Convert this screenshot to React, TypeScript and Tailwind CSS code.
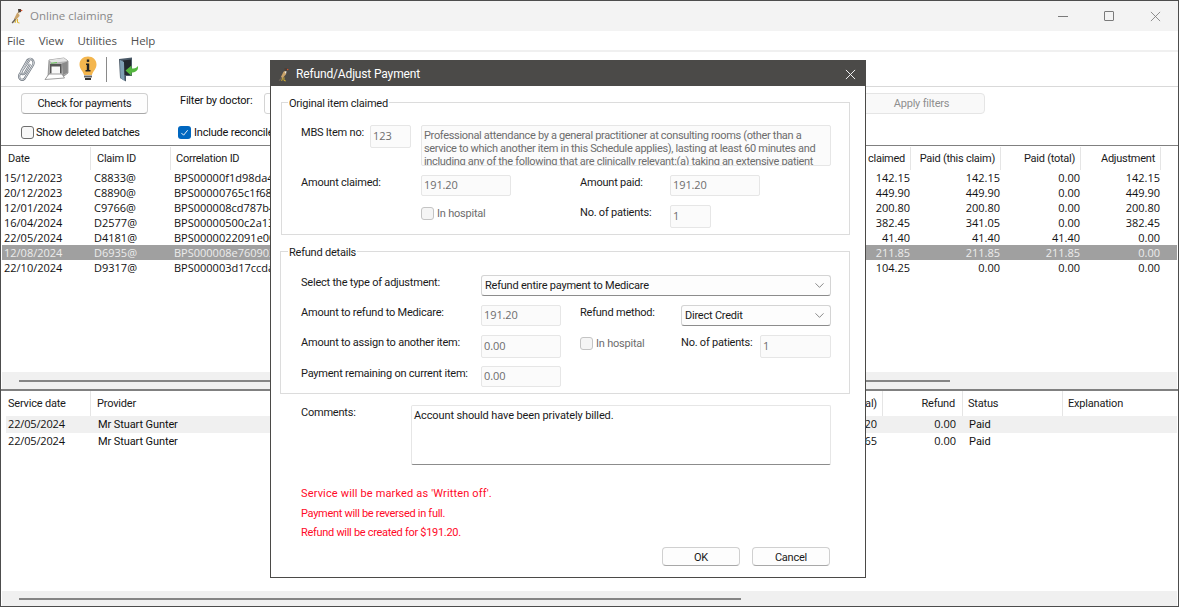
import React from 'react';
import { ChevronDown } from 'lucide-react';

type ClaimRow = {
  date: string;
  claimId: string;
  correlation: string;
  claimed: string;
  paid: string;
  paidTotal: string;
  adjustment: string;
  selected?: boolean;
};

const claims: ClaimRow[] = [
  { date: '15/12/2023', claimId: 'C8833@', correlation: 'BPS00000f1d98da4', claimed: '142.15', paid: '142.15', paidTotal: '0.00', adjustment: '142.15' },
  { date: '20/12/2023', claimId: 'C8890@', correlation: 'BPS00000765c1f68', claimed: '449.90', paid: '449.90', paidTotal: '0.00', adjustment: '449.90' },
  { date: '12/01/2024', claimId: 'C9766@', correlation: 'BPS000008cd787b4', claimed: '200.80', paid: '200.80', paidTotal: '0.00', adjustment: '200.80' },
  { date: '16/04/2024', claimId: 'D2577@', correlation: 'BPS00000500c2a13', claimed: '382.45', paid: '341.05', paidTotal: '0.00', adjustment: '382.45' },
  { date: '22/05/2024', claimId: 'D4181@', correlation: 'BPS0000022091e00', claimed: '41.40', paid: '41.40', paidTotal: '41.40', adjustment: '0.00' },
  { date: '12/08/2024', claimId: 'D6935@', correlation: 'BPS000008e760903', claimed: '211.85', paid: '211.85', paidTotal: '211.85', adjustment: '0.00', selected: true },
  { date: '22/10/2024', claimId: 'D9317@', correlation: 'BPS000003d17ccda', claimed: '104.25', paid: '0.00', paidTotal: '0.00', adjustment: '0.00' },
];

function BirdIcon({ className }: { className?: string }) {
  return (
    <svg viewBox="0 0 12 16" className={className}>
      <path d="M3 11 L6 5 L9 3 L8.5 8 L5 12 Z" fill="#c9a36a" />
      <path d="M7 1 L10 1 L10 4 L7.5 5 Z" fill="#4a4038" />
      <path d="M9.8 1.6 L11.8 2.6 L9.8 3.6 Z" fill="#e0502a" />
      <path d="M7 5 L9.2 4.2 L8.8 7.5 Z" fill="#f2ecdf" />
      <path d="M0.6 14.4 L4 10.6 L5 12 L1.6 15.4 Z" fill="#6a6258" />
      <path d="M5 12 L4 15 M6.5 11 L6.5 14.5 L8.5 15" stroke="#e0b830" strokeWidth="1" fill="none" />
    </svg>
  );
}

function PaperclipIcon() {
  const d = 'M13.5 2.5 L2.8 18 C0.6 22 4.4 25.6 7.6 22.6 L16 9 C18 4.6 13.6 0.6 10.6 4 L4.6 14.5 C3.2 17.5 6.2 19.4 8 16.8 L13 8';
  return (
    <svg viewBox="0 0 18 26" className="w-[18px] h-[26px]">
      <path d={d} fill="none" stroke="#6f7780" strokeWidth="2.2" />
      <path d={d} fill="none" stroke="#eef0f2" strokeWidth="0.8" />
    </svg>
  );
}

function PrinterIcon() {
  return (
    <svg viewBox="0 0 25 24" className="w-[25px] h-[24px]">
      <path d="M5 3 L20 1 L24 4 L24 16 L20 19 L4 19 Z" fill="#b4b4b4" stroke="#6a6a6a" strokeWidth="0.6" />
      <path d="M5 3 L20 1 L23.5 4 L8 6 Z" fill="#e4e4e4" />
      <path d="M18 6.5 L23.5 4.5 L23.5 15.5 L19 18 Z" fill="#8a8a8a" />
      <rect x="6" y="7" width="11.5" height="9" fill="#565656" />
      <path d="M7 5.8 L13 5 L13 6 L7 6.8 Z" fill="#67c35a" />
      <path d="M7.5 9.5 L16 9.5 L16 17 L7.5 17 Z" fill="#f8f8f8" />
      <path d="M5 17 L18 17 L20.5 21 L1 22.5 Z" fill="#ffffff" stroke="#777" strokeWidth="0.7" />
    </svg>
  );
}

function BulbIcon() {
  return (
    <svg viewBox="0 0 18 26" className="w-[18px] h-[26px]">
      <path d="M9 0.5 C4 0.5 0.5 4 0.5 8.5 C0.5 13 4 15 5 19 L13 19 C14 15 17.5 13 17.5 8.5 C17.5 4 14 0.5 9 0.5 Z" fill="#f4b64e" />
      <rect x="7.8" y="3.5" width="2.4" height="2.4" fill="#222" />
      <path d="M7 7.5 L10.2 7.5 L10.2 14 L11.5 14 L11.5 15.5 L6.5 15.5 L6.5 14 L7.8 14 L7.8 9 L7 9 Z" fill="#222" />
      <rect x="5" y="19.5" width="8" height="2" fill="#666" />
      <rect x="6" y="22" width="6" height="2" fill="#333" />
    </svg>
  );
}

function DoorIcon() {
  return (
    <svg viewBox="0 0 21 25" className="w-[21px] h-[25px]">
      <path d="M1 2 L14 0.5 L14 19 L8 19 L8 24.5 L2 21 Z" fill="#4b5a68" />
      <path d="M5 3.5 L13 2.6 L13 18 L5 18 Z" fill="#22282e" />
      <path d="M2 3 L6 5 L6.5 24 L2.5 21 Z" fill="#7fa0b4" />
      <path d="M20 10.5 C20 14 17 15.5 13.5 15.5 L13.5 19 L7.5 13.5 L13.5 8.5 L13.5 11.5 C16 11.5 18 11.5 20 9 Z" fill="#54b83f" />
    </svg>
  );
}

function Checkbox({ checked, disabled }: { checked?: boolean; disabled?: boolean }) {
  if (checked) {
    return (
      <span className="w-[13px] h-[13px] rounded-[3px] bg-[#0067c0] flex items-center justify-center shrink-0">
        <svg viewBox="0 0 10 10" className="w-[9px] h-[9px]">
          <path d="M1.5 5.5 L4 8 L8.5 2.5" fill="none" stroke="#fff" strokeWidth="1" />
        </svg>
      </span>
    );
  }
  return (
    <span
      className={
        disabled
          ? 'w-[13px] h-[13px] rounded-[3px] border border-[#c4c4c4] bg-[#f5f5f5] shrink-0'
          : 'w-[13px] h-[13px] rounded-[3px] border border-[#6e6e6e] bg-[#f8f8f8] shrink-0'
      }
    />
  );
}

function ReadOnlyBox({ value, className }: { value: string; className: string }) {
  return (
    <input
      readOnly
      value={value}
      className={`border border-[#e6e6e6] bg-[#fbfbfb] rounded-[2px] px-[2px] pb-[2px] font-['Open_Sans',sans-serif] tracking-[-0.1px] text-[#6d6d6d] outline-none ${className}`}
    />
  );
}

function SelectBox({ value, className }: { value: string; className: string }) {
  return (
    <div
      className={`h-[21px] flex items-center justify-between pl-[3px] pr-[3px] border border-[#d4d4d4] border-b-[#8c8c8c] rounded-[3px] bg-[#fdfdfd] text-[#1a1a1a] ${className}`}
    >
      <span className="pt-[1px]">{value}</span>
      <ChevronDown size={15} strokeWidth={1} color="#444" />
    </div>
  );
}

function ActionButton({ label, className }: { label: string; className: string }) {
  return (
    <button className={`border border-[#d0d0d0] border-b-[#a8a8a8] rounded-[4px] bg-[#fdfdfd] text-[#1a1a1a] pt-[2px] ${className}`}>
      {label}
    </button>
  );
}

function RefundDialog() {
  return (
    <div className="absolute left-[269px] top-[59px] w-[596px] h-[518px] border border-[#4b4a48] bg-white flex flex-col tracking-[-0.22px]">
      <div className="h-[25px] shrink-0 bg-[#4b4a48] flex items-center pt-[1px] pl-[7px] pr-[9px] text-white">
        <BirdIcon className="w-[11px] h-[15px]" />
        <span className="ml-[7px] text-[12px] tracking-[-0.15px]">Refund/Adjust Payment</span>
        <svg viewBox="0 0 12 12" className="w-[11px] h-[11px] ml-auto">
          <path d="M1 1 L11 11 M11 1 L1 11" stroke="#fff" strokeWidth="1" />
        </svg>
      </div>

      {/* Original item */}
      <fieldset className="ml-[10px] mr-[15px] mt-[8px] h-[141px] shrink-0 border border-[#dcdcdc]">
        <legend className="ml-[6px] px-[1px] pt-[4px] leading-[12px] text-[#1a1a1a]">Original item claimed</legend>
        <div className="pl-[19px] pt-[15px] grid grid-cols-[120px_159px_90px_161px] grid-rows-[50px_30px_23px] leading-[16px] text-[#1a1a1a] whitespace-nowrap">
          <div className="flex items-start justify-between pr-[10px]">
            <span>MBS Item no:</span>
            <ReadOnlyBox value="123" className="w-[41px] h-[23px]" />
          </div>
          <div className="col-span-3 h-[41px] overflow-hidden border border-[#e6e6e6] bg-[#fbfbfb] rounded-[2px] pl-[2px] pr-[2px] pt-[3px] leading-[13px] text-[#6d6d6d] whitespace-normal tracking-[-0.33px]">
            Professional attendance by a general practitioner at consulting rooms (other than a service to which another item in this Schedule applies), lasting at least 60 minutes and including any of the following that are clinically relevant:(a) taking an extensive patient
          </div>
          <span>Amount claimed:</span>
          <ReadOnlyBox value="191.20" className="w-[90px] h-[21px]" />
          <span>Amount paid:</span>
          <ReadOnlyBox value="191.20" className="w-[90px] h-[21px]" />
          <span />
          <div className="flex items-start pt-[2px] gap-[3px] leading-[14px] text-[#6d6d6d]">
            <Checkbox disabled />
            <span>In hospital</span>
          </div>
          <span>No. of patients:</span>
          <ReadOnlyBox value="1" className="w-[41px] h-[23px]" />
        </div>
      </fieldset>

      {/* Refund details */}
      <fieldset className="ml-[9px] mr-[15px] mt-[8px] h-[151px] shrink-0 border border-[#dcdcdc]">
        <legend className="ml-[7px] px-[1px] pt-[4px] leading-[12px] text-[#1a1a1a]">Refund details</legend>
        <div className="pl-[20px] pt-[16px] grid grid-cols-[180px_99px_101px_79px_71px] grid-rows-[30px_30px_31px_21px] leading-[16px] text-[#1a1a1a] whitespace-nowrap">
          <span>Select the type of adjustment:</span>
          <SelectBox value="Refund entire payment to Medicare" className="col-span-4" />

          <span>Amount to refund to Medicare:</span>
          <ReadOnlyBox value="191.20" className="w-[80px] h-[21px]" />
          <span>Refund method:</span>
          <SelectBox value="Direct Credit" className="col-span-2" />

          <span>Amount to assign to another item:</span>
          <ReadOnlyBox value="0.00" className="w-[80px] h-[23px]" />
          <div className="flex items-start pt-[2px] gap-[3px] leading-[14px] text-[#6d6d6d]">
            <Checkbox disabled />
            <span>In hospital</span>
          </div>
          <span>No. of patients:</span>
          <ReadOnlyBox value="1" className="w-[71px] h-[23px]" />

          <span>Payment remaining on current item:</span>
          <ReadOnlyBox value="0.00" className="w-[80px] h-[21px]" />
        </div>
      </fieldset>

      <div className="mt-[11px] pl-[30px] flex leading-[14px] text-[#1a1a1a]">
        <span className="w-[110px] leading-[16px]">Comments:</span>
        <div className="w-[420px] h-[60px] border border-[#e6e6e6] border-b-[#8c8c8c] rounded-[2px] px-[2px] pt-[3px] tracking-[-0.12px]">
          Account should have been privately billed.
        </div>
      </div>

      <div className="mt-[22px] pl-[30px] flex flex-col gap-[5.5px] leading-[14px] text-[#ff0a28] tracking-[-0.3px]">
        <span className="tracking-[0.15px]">Service will be marked as 'Written off'.</span>
        <span>Payment will be reversed in full.</span>
        <span>Refund will be created for $191.20.</span>
      </div>

      <div className="mt-[7px] pr-[35px] flex justify-end gap-[12px]">
        <ActionButton label="OK" className="w-[78px] h-[19px]" />
        <ActionButton label="Cancel" className="w-[78px] h-[19px]" />
      </div>
    </div>
  );
}

function ScrollTrack({ thumb, className }: { thumb: string; className?: string }) {
  return (
    <div className={`bg-[#f0f0f0] flex items-center pl-[17px] ${className ?? ''}`}>
      <div className={`h-[2px] bg-[#858585] ${thumb}`} />
    </div>
  );
}

export default function App() {
  return (
    <div className="relative w-[1179px] h-[607px] overflow-hidden bg-white border border-[#4d4d4d] flex flex-col font-[Roboto,sans-serif] text-[11px] text-[#111]">
      {/* title bar */}
      <div className="h-[30px] shrink-0 bg-[#f3f3f3] flex items-center pl-[10px] text-[#8a8a8a]">
        <BirdIcon className="w-[12px] h-[16px]" />
        <span className="ml-[7px] text-[11.5px] font-['Open_Sans',sans-serif]">Online claiming</span>
        <div className="ml-auto flex items-center">
          <div className="w-[46px] flex justify-center"><div className="w-[10px] h-px bg-[#7a7a7a]" /></div>
          <div className="w-[46px] flex justify-center"><div className="w-[10px] h-[10px] border border-[#7a7a7a] rounded-[1px]" /></div>
          <div className="w-[46px] flex justify-center">
            <svg viewBox="0 0 12 12" className="w-[11px] h-[11px]">
              <path d="M1 1 L11 11 M11 1 L1 11" stroke="#7a7a7a" strokeWidth="0.9" />
            </svg>
          </div>
        </div>
      </div>

      {/* menu */}
      <div className="h-[19px] shrink-0 flex items-center pl-[6px] gap-[14px] text-[#505050] text-[11.5px] font-['Open_Sans',sans-serif] tracking-[-0.1px] border-b-2 border-[#f0f0f0] box-content">
        <span>File</span>
        <span>View</span>
        <span>Utilities</span>
        <span>Help</span>
      </div>

      {/* toolbar */}
      <div className="h-[35px] shrink-0 flex items-center pl-[16px] border-b border-[#d9d9d9]">
        <PaperclipIcon />
        <div className="ml-[9px]"><PrinterIcon /></div>
        <div className="ml-[10px]"><BulbIcon /></div>
        <div className="ml-[9px] w-px h-[25px] bg-[#8a8a8a]" />
        <div className="ml-[11px]"><DoorIcon /></div>
      </div>

      {/* filters */}
      <div className="h-[59px] shrink-0 pl-[20px] pt-[6px] border-b border-[#808080] flex flex-col tracking-[-0.2px]">
        <div className="flex items-start h-[21px]">
          <ActionButton label="Check for payments" className="w-[127px] h-[21px]" />
          <span className="ml-[32px] w-[84px] leading-[16px]">Filter by doctor:</span>
          <div className="w-[120px] h-[21px] border border-[#d4d4d4] rounded-[3px]" />
          <button className="ml-auto mr-[193px] pt-[2px] w-[127px] h-[21px] border border-[#e5e5e5] rounded-[4px] bg-[#f9f9f9] text-[#8f8f8f]">
            Apply filters
          </button>
        </div>
        <div className="mt-[10px] flex items-center">
          <Checkbox />
          <span className="ml-[2px] w-[142px] pt-[1px]">Show deleted batches</span>
          <Checkbox checked />
          <span className="ml-[3px] pt-[1px]">Include reconciled</span>
        </div>
      </div>

      {/* claims */}
      <div className="flex-1 min-h-0 flex flex-col">
        <div className="h-[24px] shrink-0 flex items-stretch pt-[1px] text-[#1a1a1a] tracking-[-0.25px]">
          <div className="w-[90px] border-r border-[#e5e5e5] pl-[7px] pt-[2px] flex items-center">Date</div>
          <div className="w-[80px] border-r border-[#e5e5e5] pl-[6px] pt-[2px] flex items-center">Claim ID</div>
          <div className="flex-1 pl-[5px] pt-[2px] flex items-center">Correlation ID</div>
          <div className="w-[80px] border-r border-[#e5e5e5] pr-[5px] pt-[2px] flex items-center justify-end">claimed</div>
          <div className="w-[90px] border-r border-[#e5e5e5] pr-[5px] pt-[2px] flex items-center justify-end">Paid (this claim)</div>
          <div className="w-[80px] border-r border-[#e5e5e5] pr-[5px] pt-[2px] flex items-center justify-end">Paid (total)</div>
          <div className="w-[80px] border-r border-[#e5e5e5] pr-[5px] pt-[2px] flex items-center justify-end">Adjustment</div>
          <div className="w-[17px]" />
        </div>
        {claims.map((c) => (
          <div
            key={c.claimId}
            className={`h-[15px] leading-[15px] shrink-0 mx-[1px] flex font-['Open_Sans',sans-serif] ${c.selected ? 'bg-[#a0a0a0] text-[#ececec]' : ''}`}
          >
            <div className="w-[89px] pl-[2px]">{c.date}</div>
            <div className="w-[80px] pl-[3px]">{c.claimId}</div>
            <div className="flex-1 pl-[3px]">{c.correlation}</div>
            <div className="w-[80px] text-right">{c.claimed}</div>
            <div className="w-[90px] text-right">{c.paid}</div>
            <div className="w-[80px] text-right">{c.paidTotal}</div>
            <div className="w-[80px] text-right">{c.adjustment}</div>
            <div className="w-[17px]" />
          </div>
        ))}
        <div className="flex-1" />
        <ScrollTrack thumb="w-[931px]" className="h-[17px] shrink-0 mx-[1px]" />
      </div>

      {/* services */}
      <div className="h-[217px] shrink-0 border-t-2 border-[#808080] flex flex-col">
        <div className="h-[25px] shrink-0 flex items-stretch text-[#1a1a1a] tracking-[-0.2px]">
          <div className="w-[90px] border-r border-[#e5e5e5] pl-[7px] pt-[2px] flex items-center">Service date</div>
          <div className="flex-1 pl-[6px] pt-[2px] flex items-center">Provider</div>
          <div className="w-[80px] border-r border-[#e5e5e5] pr-[5px] pt-[2px] flex items-center justify-end">Paid (total)</div>
          <div className="w-[80px] border-r border-[#e5e5e5] pr-[7px] pt-[2px] flex items-center justify-end">Refund</div>
          <div className="w-[100px] border-r border-[#e5e5e5] pl-[5px] pt-[2px] flex items-center">Status</div>
          <div className="w-[115px] pl-[5px] pt-[2px] flex items-center">Explanation</div>
        </div>
        {['20', '65'].map((paid, i) => (
          <div key={paid} className={`h-[17px] leading-[17px] shrink-0 ml-[5px] mr-[1px] flex ${i === 0 ? 'bg-[#f0f0f0]' : ''}`}>
            <div className="w-[85px] pl-[2px] leading-[15px] font-['Open_Sans',sans-serif] tracking-[-0.15px]">22/05/2024</div>
            <div className="flex-1 pl-[7px] tracking-[-0.1px]">Mr Stuart Gunter</div>
            <div className="w-[80px] pr-[7px] leading-[15px] text-right font-['Open_Sans',sans-serif]">{paid}</div>
            <div className="w-[79px] pr-[7px] leading-[15px] text-right font-['Open_Sans',sans-serif]">0.00</div>
            <div className="w-[100px] pl-[6px]">Paid</div>
            <div className="w-[114px]" />
          </div>
        ))}
        <div className="flex-1" />
        <ScrollTrack thumb="w-[722px]" className="h-[15px] shrink-0 mx-[1px]" />
      </div>

      <RefundDialog />
    </div>
  );
}
